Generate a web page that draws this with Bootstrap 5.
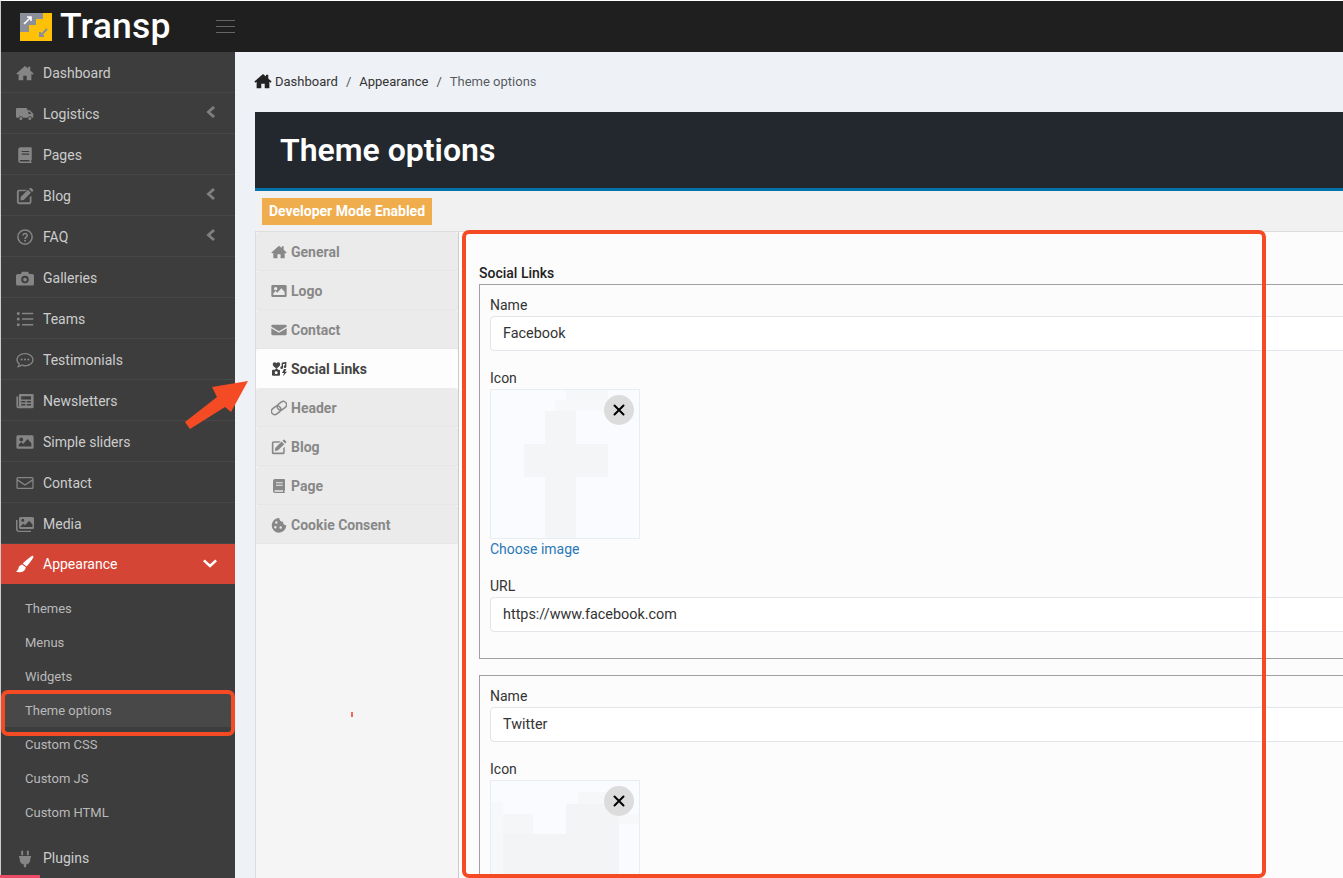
<!DOCTYPE html>
<html lang="en">
<head>
  <meta charset="UTF-8" />
  <meta name="viewport" content="width=device-width, initial-scale=1" />
  <title>Theme options</title>
  <link href="https://cdn.jsdelivr.net/npm/bootstrap@5.3.0/dist/css/bootstrap.min.css" rel="stylesheet" />
  <style>
    html, body { height: 100%; overflow: hidden; }
    body { font-family: Roboto, "Liberation Sans", sans-serif; font-size: 14px; background: #eef1f6; color: #333; position: relative; }
    .ic { width: 18px; height: 18px; fill: currentColor; flex: none; }

    .topbar { height: 52px; background: #1f1f1f; border-top: 1px solid #fff; border-left: 1px solid #ccc; padding-left: 19px; }
    .logo-box { width: 32px; height: 28px; margin-top: 1px; }
    .logo-text { font-size: 35.5px; font-weight: 500; color: #fff; line-height: 1; margin-left: 8px; width: 156px; letter-spacing: .2px; }
    .burger { width: 19px; height: 13px; border-top: 1px solid #666; border-bottom: 1px solid #666; position: relative; }
    .burger::after { content: ""; display: block; height: 1px; background: #666; margin-top: 5px; }

    .shell { height: 826px; }
    .side { width: 235px; flex: none; background: #3d3d3d; border-left: 1px solid #ccc; }
    .side-link { height: 41px; padding: 2px 16px 0 15px; border-bottom: 1px solid #474747; color: #ccc; text-decoration: none; font-size: 14px; }
    .side-link .ic { color: #858585; margin-right: 9px; }
    .side-link .arr { width: 14px; height: 14px; margin: -4px 2px 0 auto; color: #808080; }
    .side-link.on { background: #d54536; color: #fff; height: 40px; border: 0; padding-top: 0; }
    .side-link.on .ic { color: #fff; }
    .side-link.on .arr { margin-top: -2px; margin-right: 2px; }
    .sub-list { padding: 7px 0 8px; margin: 0; list-style: none; }
    .sub-link { height: 34px; padding: 2px 0 0 24px; color: #b9b9b9; font-size: 13px; text-decoration: none; }
    .sub-link.on { background: #484848; }
    .side-link.last { border: 0; }

    .page-main { width: 1108px; flex: none; padding: 0 0 0 20px; }
    .crumbs { height: 60px; margin: 0; font-size: 13px; --bs-breadcrumb-divider-color: #555; --bs-breadcrumb-item-padding-x: 8px; }
    .crumbs a { color: #333; text-decoration: none; }
    .crumbs .ic { width: 18px; height: 18px; color: #222; margin: 0 3px 0 -1px; vertical-align: -4px; }
    .page-head { height: 79px; background: #22282d; border-bottom: 3px solid #0073aa; color: #fff; padding: 0 25px; }
    .page-head h1 { font-size: 32px; font-weight: 600; margin: 0; }
    .dev-bar { height: 41px; background: #f1f1f1; padding: 7px; border-bottom: 1px solid #ddd; }
    .dev-tag { height: 27px; width: 170px; background: #f0ad4e; color: #fff; font-weight: 700; font-size: 14px; }

    .tabs-col { width: 204px; flex: none; background: #f5f5f5; border-left: 1px solid #ddd; border-right: 1px solid #ccc; min-height: 700px; }
    .tab-link { height: 39px; padding: 2px 0 0 15px; background: #ebebeb; border-bottom: 1px solid #e6e6e6; border-radius: 4px 4px 0 0; color: #888; font-weight: 700; font-size: 14px; text-decoration: none; }
    .tab-link .ic { width: 16px; height: 16px; margin-right: 4px; }
    .tab-link.on { background: #fdfdfd; color: #444; border-color: #fdfdfd; }
    .panel-area { flex: 1; background: #fcfcfc; padding: 33px 0 0 20px; min-width: 0; }
    .group-label { font-size: 14px; font-weight: 500; color: #222; margin-bottom: 2px; line-height: 17px; }
    .repeat-box { border: 1px solid #a0a0a0; padding: 11px 10px 26px; margin-bottom: 16px; width: 1000px; }
    .field-label { font-size: 14px; color: #333; margin-bottom: 2px; line-height: 18px; display: block; }
    .repeat-box .form-control { height: 35px; font-size: 14.4px; color: #333; border-color: #e2e5ea; border-radius: 4px; padding-left: 12px; margin-bottom: 18px; box-shadow: none; }
    .repeat-box .last-input { margin-bottom: 0; }
    .thumb { width: 150px; height: 150px; background: #fafbfe; border: 1px solid #e8edf1; position: relative; margin-top: 2px; }
    .thumb svg.pic { display: block; width: 148px; height: 148px; }
    .thumb-x { position: absolute; top: 5px; right: 5px; width: 30px; height: 30px; border-radius: 50%; background: #dcdcdc; border: 0; padding: 0; }
    .thumb-x svg { width: 12px; height: 12px; display: block; margin: auto; }
    .choose { color: #2a78b8; text-decoration: none; font-size: 14px; line-height: 18px; display: block; margin: 1px 0 19px; }

    /* annotation marks on top of the screenshot */
    .mark-box { position: absolute; border: 4px solid #f54b24; border-radius: 7px; pointer-events: none; }
    .mark-side { left: 1px; top: 690px; width: 234px; height: 46px; }
    .mark-main { left: 462px; top: 230px; width: 804px; height: 648px; }
    .mark-arrow { position: absolute; left: 180px; top: 375px; width: 75px; height: 60px; fill: #f54b24; }
    .mark-tick { position: absolute; left: 351px; top: 712px; width: 2px; height: 5px; background: #f0655f; }
    .mark-pink { position: absolute; left: 0; top: 875px; width: 40px; height: 3px; background: #ec4a68; }
  </style>
</head>
<body>
  <svg width="0" height="0" class="position-absolute">
    <defs>
      <symbol id="i-home" viewBox="0 0 24 24"><path d="M12 2.500 0.500 12.600l1.400 1.600L3.500 13v8.500h6.200v-6h4.600v6h6.200V13l1.600 1.200 1.400-1.600L19 8.600V3.500h-3v2.500z"/></symbol>
      <symbol id="i-truck" viewBox="0 0 24 24"><path d="M1.500 4h12A1.500 1.500 0 0 1 15 5.500V7h3.500L23 11.500V17h-1.700a3 3 0 0 0-5.600 0H9.300a3 3 0 0 0-5.600 0H1.500A1.500 1.500 0 0 1 0 15.500v-10A1.500 1.500 0 0 1 1.500 4zM6.500 16a2 2 0 1 1 0 4 2 2 0 0 1 0-4zm12 0a2 2 0 1 1 0 4 2 2 0 0 1 0-4zM16.500 9v3h4l-2.500-3z"/></symbol>
      <symbol id="i-book" viewBox="0 0 24 24"><path d="M6 1.500h13.500A1.500 1.500 0 0 1 21 3v15a1.500 1.500 0 0 1-.8 1.300v1.900a1 1 0 0 1 .8 1V22.500H6A3 3 0 0 1 3 19.500V4.500a3 3 0 0 1 3-3zM7.500 6.500v1.500h10V6.500zm0 3.500v1.500h10V10zM6 18.500a1 1 0 0 0 0 2h12v-2z"/></symbol>
      <symbol id="i-edit" viewBox="0 0 24 24"><path d="M4 3.500h10.500l-2.300 2.300H4.500a.8.800 0 0 0-.8.8v13a.8.800 0 0 0 .8.800h13a.8.800 0 0 0 .8-.8v-5.800l2.300-2.300v8.600a2.800 2.800 0 0 1-2.800 2.800H4a2.800 2.800 0 0 1-2.800-2.800V6.300A2.800 2.800 0 0 1 4 3.500zM20.200 1.200l2.600 2.600a1 1 0 0 1 0 1.400l-1.500 1.500-4-4 1.500-1.500a1 1 0 0 1 1.400 0zM15.900 3.800l4 4-9.600 9.600-4.500.5.500-4.500z"/></symbol>
      <symbol id="i-help" viewBox="0 0 24 24"><path d="M12 1.500a10.500 10.500 0 1 1 0 21 10.500 10.500 0 0 1 0-21zm0 2a8.500 8.500 0 1 0 0 17 8.500 8.500 0 0 0 0-17zm.2 3a3.800 3.800 0 0 1 3.800 3.500c0 2.800-2.900 2.800-2.900 4.600H11c0-3 2.900-3.200 2.900-4.600a1.700 1.700 0 0 0-3.400 0H8.400a3.800 3.800 0 0 1 3.800-3.500zM12 15.800a1.300 1.300 0 1 1 0 2.600 1.300 1.300 0 0 1 0-2.600z"/></symbol>
      <symbol id="i-camera" viewBox="0 0 24 24"><path d="M8 3.500h8l1.500 3h4A2.500 2.500 0 0 1 24 9v10.500a2.500 2.500 0 0 1-2.500 2.500h-19A2.500 2.500 0 0 1 0 19.500V9a2.500 2.500 0 0 1 2.500-2.500h4zM12 9a5 5 0 1 0 0 10 5 5 0 0 0 0-10zm0 2.500a2.500 2.500 0 1 1 0 5 2.500 2.500 0 0 1 0-5z"/></symbol>
      <symbol id="i-list" viewBox="0 0 24 24"><path d="M3 2.500a2 2 0 1 1 0 4 2 2 0 0 1 0-4zm5 1h15v2H8zM3 10a2 2 0 1 1 0 4 2 2 0 0 1 0-4zm5 1h15v2H8zM3 17.500a2 2 0 1 1 0 4 2 2 0 0 1 0-4zm5 1h15v2H8z"/></symbol>
      <symbol id="i-comment" viewBox="0 0 24 24"><path d="M12 2.500c6.400 0 11.500 4 11.500 9s-5.100 9-11.500 9c-1.500 0-3-.2-4.300-.7C6 21 3.500 22 .8 22c1.500-1.500 2.400-3 2.700-4.500C1.600 15.900.5 13.800.5 11.500c0-5 5.100-9 11.500-9zm0 1.800c-5.500 0-9.700 3.300-9.700 7.200 0 2 1.100 3.800 2.900 5.200-.1 1-.4 1.900-.9 2.800 1.300-.4 2.400-1.100 3.200-1.900 1.300.5 2.900.9 4.500.9 5.500 0 9.700-3.300 9.700-7S17.500 4.300 12 4.300zM7.500 10a1.400 1.400 0 1 1 0 2.800 1.400 1.400 0 0 1 0-2.800zm4.500 0a1.400 1.400 0 1 1 0 2.800 1.400 1.400 0 0 1 0-2.800zm4.500 0a1.400 1.400 0 1 1 0 2.800 1.400 1.400 0 0 1 0-2.800z"/></symbol>
      <symbol id="i-news" viewBox="0 0 24 24"><path d="M5 2.500h17A1.500 1.500 0 0 1 23.500 4v16a1.500 1.500 0 0 1-1.500 1.500H3A2.500 2.500 0 0 1 .5 19V6H3v13a.5.500 0 0 0 1 0V3.500A1 1 0 0 1 5 2.500zm2 3v4.500h13V5.500zm0 6.500v2h5.500v-2zm7.500 0v2H20v-2zM7 16v2h5.500v-2zm7.500 0v2H20v-2z"/></symbol>
      <symbol id="i-image" viewBox="0 0 24 24"><path d="M2.500 3h19A2 2 0 0 1 23.500 5v14a2 2 0 0 1-2 2h-19a2 2 0 0 1-2-2V5a2 2 0 0 1 2-2zM7 6a2.500 2.500 0 1 0 0 5 2.500 2.500 0 0 0 0-5zm-3.500 12h17v-4.500L15.500 8l-6 6.500-2.500-2.500-3.500 3.500z"/></symbol>
      <symbol id="i-mail" viewBox="0 0 24 24"><path d="M2.500 4h19A2 2 0 0 1 23.500 6v12a2 2 0 0 1-2 2h-19a2 2 0 0 1-2-2V6a2 2 0 0 1 2-2zm0 1.800a.3.300 0 0 0-.3.300v1l9.800 6.500 9.800-6.500v-1a.3.300 0 0 0-.3-.3zM2.200 9.200v8.800c0 .1.100.2.300.2h19c.2 0 .3-.1.300-.2V9.200l-9.800 6.500z"/></symbol>
      <symbol id="i-mail-solid" viewBox="0 0 24 24"><path d="M2.500 4h19A2 2 0 0 1 23.500 6v1L12 14 .5 7V6a2 2 0 0 1 2-2zM.5 9.300 12 16.300l11.500-7V18a2 2 0 0 1-2 2h-19a2 2 0 0 1-2-2z"/></symbol>
      <symbol id="i-images" viewBox="0 0 24 24"><path d="M6 2.500h16A2 2 0 0 1 24 4.500v12a2 2 0 0 1-2 2H6a2 2 0 0 1-2-2v-12a2 2 0 0 1 2-2zm3 2.500a2 2 0 1 0 0 4 2 2 0 0 0 0-4zM6 16h16v-3.500L17.500 7.500l-5.500 6-2-2L6 15zM0 6.500h2v12a2.500 2.500 0 0 0 2.500 2.500H20v1.500H4A4 4 0 0 1 0 18.500z"/></symbol>
      <symbol id="i-brush" viewBox="0 0 24 24"><path d="M22.500 1c1 .7.800 2 .2 3.100-1.900 3.400-5.500 8.100-8.700 11.300l-5-4.200C12.300 8 17.500 3.600 20.500 1.500c.7-.4 1.400-.8 2-.5zM8.300 12.500l4.700 3.900c-.4 3.700-3.100 6.600-7 6.600-2.500 0-5-.7-6-1.500 2.200-.7 2.800-2.300 3.300-4.300.6-2.500 2.500-4.400 5-4.700z"/></symbol>
      <symbol id="i-plug" viewBox="0 0 24 24"><path d="M7 1h2.500v6H7zm7.500 0H17v6h-2.500zM4 8h16v2.500h-1v2a7 7 0 0 1-5.500 6.800V23h-3v-3.700A7 7 0 0 1 5 12.500v-2H4z"/></symbol>
      <symbol id="i-left" viewBox="0 0 12 12"><path d="M8.600.8 10.300 2.500 6.300 6l4 3.500-1.700 1.700L2.900 6z"/></symbol>
      <symbol id="i-down" viewBox="0 0 12 12"><path d="M1.500 3 6 7 10.500 3 12 4.500 6 10 0 4.500z"/></symbol>
      <symbol id="i-link" viewBox="0 0 24 24"><g fill="none" stroke="currentColor" stroke-width="2.200" transform="rotate(-38 12 12)"><rect x="-1" y="7" width="15" height="10" rx="5"/><rect x="10" y="7" width="15" height="10" rx="5"/></g></symbol>
      <symbol id="i-cookie" viewBox="0 0 24 24"><path d="M12.500 1.500A5.500 5.500 0 0 0 18 7a5.500 5.500 0 0 0 5 5.500A11 11 0 1 1 12.500 1.500zM8 6.500a1.800 1.800 0 1 0 0 3.600 1.800 1.800 0 0 0 0-3.600zm-1.500 7a1.800 1.800 0 1 0 0 3.600 1.800 1.800 0 0 0 0-3.600zm8 .5a1.800 1.800 0 1 0 0 3.600 1.800 1.800 0 0 0 0-3.600z"/></symbol>
      <symbol id="i-social" viewBox="0 0 24 24"><path d="M5.500 2c1.200 0 2 .5 2.700 1.400C8.900 2.500 9.700 2 10.900 2c1.700 0 2.900 1.300 2.900 3 0 2.400-2.600 4.200-5.600 6.600C5.200 9.200 2.600 7.400 2.600 5c0-1.700 1.300-3 2.900-3zM16 2.500l7-1.500v7.500a2 2 0 1 1-2-2V4l-3 .7v5.300a2 2 0 1 1-2-2zM4.500 13h1.500l1-1.300h2.500l1 1.300h1.500A1.500 1.500 0 0 1 13.500 14.500v6A1.500 1.500 0 0 1 12 22H3a1.500 1.500 0 0 1-1.500-1.500v-6A1.500 1.500 0 0 1 3 13zm3.300 2.500a2.200 2.200 0 1 0 0 4.400 2.200 2.200 0 0 0 0-4.400zM19.500 12h3.500l-2 4h3l-6 7 1.500-5h-3z"/></symbol>
    </defs>
  </svg>

  <header class="topbar d-flex align-items-center">
    <svg class="logo-box" viewBox="0 0 32 28">
      <rect width="32" height="28" fill="#ffc107"/>
      <path d="M0 0h23v6h-7v6H9v7H0z" fill="#8a8f99"/>
      <path d="M4 11 11 4M7 4h4v4" stroke="#fff" stroke-width="1.600" fill="none"/>
      <path d="M27 16 20 23M24 23h-4v-4" stroke="#8a8f99" stroke-width="2" fill="none"/>
    </svg>
    <span class="logo-text">Transp</span>
    <span class="burger"></span>
  </header>

  <div class="shell d-flex">
    <nav class="side">
      <a class="side-link d-flex align-items-center" href="#"><svg class="ic"><use href="#i-home"/></svg>Dashboard</a>
      <a class="side-link d-flex align-items-center" href="#"><svg class="ic"><use href="#i-truck"/></svg>Logistics<svg class="ic arr"><use href="#i-left"/></svg></a>
      <a class="side-link d-flex align-items-center" href="#"><svg class="ic"><use href="#i-book"/></svg>Pages</a>
      <a class="side-link d-flex align-items-center" href="#"><svg class="ic"><use href="#i-edit"/></svg>Blog<svg class="ic arr"><use href="#i-left"/></svg></a>
      <a class="side-link d-flex align-items-center" href="#"><svg class="ic"><use href="#i-help"/></svg>FAQ<svg class="ic arr"><use href="#i-left"/></svg></a>
      <a class="side-link d-flex align-items-center" href="#"><svg class="ic"><use href="#i-camera"/></svg>Galleries</a>
      <a class="side-link d-flex align-items-center" href="#"><svg class="ic"><use href="#i-list"/></svg>Teams</a>
      <a class="side-link d-flex align-items-center" href="#"><svg class="ic"><use href="#i-comment"/></svg>Testimonials</a>
      <a class="side-link d-flex align-items-center" href="#"><svg class="ic"><use href="#i-news"/></svg>Newsletters</a>
      <a class="side-link d-flex align-items-center" href="#"><svg class="ic"><use href="#i-image"/></svg>Simple sliders</a>
      <a class="side-link d-flex align-items-center" href="#"><svg class="ic"><use href="#i-mail"/></svg>Contact</a>
      <a class="side-link d-flex align-items-center" href="#"><svg class="ic"><use href="#i-images"/></svg>Media</a>
      <a class="side-link on d-flex align-items-center" href="#"><svg class="ic"><use href="#i-brush"/></svg>Appearance<svg class="ic arr"><use href="#i-down"/></svg></a>
      <ul class="sub-list">
        <li><a class="sub-link d-flex align-items-center" href="#">Themes</a></li>
        <li><a class="sub-link d-flex align-items-center" href="#">Menus</a></li>
        <li><a class="sub-link d-flex align-items-center" href="#">Widgets</a></li>
        <li><a class="sub-link on d-flex align-items-center" href="#">Theme options</a></li>
        <li><a class="sub-link d-flex align-items-center" href="#">Custom CSS</a></li>
        <li><a class="sub-link d-flex align-items-center" href="#">Custom JS</a></li>
        <li><a class="sub-link d-flex align-items-center" href="#">Custom HTML</a></li>
      </ul>
      <a class="side-link last d-flex align-items-center" href="#"><svg class="ic"><use href="#i-plug"/></svg>Plugins</a>
    </nav>

    <main class="page-main">
      <ol class="breadcrumb crumbs align-items-center">
        <li class="breadcrumb-item"><a href="#"><svg class="ic"><use href="#i-home"/></svg>Dashboard</a></li>
        <li class="breadcrumb-item"><a href="#">Appearance</a></li>
        <li class="breadcrumb-item active">Theme options</li>
      </ol>
      <div class="page-head d-flex align-items-center"><h1>Theme options</h1></div>
      <div class="dev-bar"><span class="dev-tag d-flex align-items-center justify-content-center">Developer Mode Enabled</span></div>
      <div class="d-flex">
        <div class="tabs-col">
          <a class="tab-link d-flex align-items-center" href="#"><svg class="ic"><use href="#i-home"/></svg>General</a>
          <a class="tab-link d-flex align-items-center" href="#"><svg class="ic"><use href="#i-image"/></svg>Logo</a>
          <a class="tab-link d-flex align-items-center" href="#"><svg class="ic"><use href="#i-mail-solid"/></svg>Contact</a>
          <a class="tab-link on d-flex align-items-center" href="#"><svg class="ic"><use href="#i-social"/></svg>Social Links</a>
          <a class="tab-link d-flex align-items-center" href="#"><svg class="ic"><use href="#i-link"/></svg>Header</a>
          <a class="tab-link d-flex align-items-center" href="#"><svg class="ic"><use href="#i-edit"/></svg>Blog</a>
          <a class="tab-link d-flex align-items-center" href="#"><svg class="ic"><use href="#i-book"/></svg>Page</a>
          <a class="tab-link d-flex align-items-center" href="#"><svg class="ic"><use href="#i-cookie"/></svg>Cookie Consent</a>
        </div>
        <section class="panel-area">
          <div class="group-label">Social Links</div>
          <div class="repeat-box">
            <label class="field-label">Name</label>
            <input class="form-control" type="text" value="Facebook" />
            <label class="field-label">Icon</label>
            <div class="thumb">
              <svg class="pic" viewBox="0 0 148 148">
                <rect x="54" y="21" width="31" height="127" fill="#f4f5f7"/>
                <rect x="33" y="54" width="84" height="33" fill="#f4f5f7"/>
                <rect x="64" y="10" width="53" height="11" fill="#f7f8f9"/>
                <rect x="75" y="0" width="42" height="10" fill="#f6f7f8"/>
              </svg>
              <button class="thumb-x d-flex align-items-center justify-content-center" type="button" aria-label="Remove">
                <svg viewBox="0 0 12 12"><path d="M1.500 1.500l9 9m0-9-9 9" stroke="#000" stroke-width="2" stroke-linecap="round"/></svg>
              </button>
            </div>
            <a class="choose" href="#">Choose image</a>
            <label class="field-label">URL</label>
            <input class="form-control last-input" type="text" value="https://www.facebook.com" />
          </div>
          <div class="repeat-box">
            <label class="field-label">Name</label>
            <input class="form-control" type="text" value="Twitter" />
            <label class="field-label">Icon</label>
            <div class="thumb">
              <svg class="pic" viewBox="0 0 148 148">
                <rect x="0" y="21" width="12" height="73" fill="#f7f8fa"/>
                <rect x="12" y="33" width="30" height="40" fill="#f5f6f8"/>
                <rect x="12" y="53" width="116" height="95" fill="#f3f4f6"/>
                <rect x="75" y="23" width="53" height="30" fill="#f3f4f6"/>
                <rect x="87" y="11" width="30" height="12" fill="#f6f7f9"/>
                <rect x="128" y="33" width="20" height="10" fill="#f7f8fa"/>
              </svg>
              <button class="thumb-x d-flex align-items-center justify-content-center" type="button" aria-label="Remove">
                <svg viewBox="0 0 12 12"><path d="M1.500 1.500l9 9m0-9-9 9" stroke="#000" stroke-width="2" stroke-linecap="round"/></svg>
              </button>
            </div>
          </div>
        </section>
      </div>
    </main>
  </div>

  <div class="mark-box mark-side"></div>
  <div class="mark-box mark-main"></div>
  <svg class="mark-arrow" viewBox="0 0 75 60"><path d="M5 47 37 22 32 12 68 6 51 37 45 32 10 54z"/></svg>
  <span class="mark-tick"></span>
  <span class="mark-pink"></span>

  <script src="https://cdn.jsdelivr.net/npm/bootstrap@5.3.0/dist/js/bootstrap.bundle.min.js"></script>
</body>
</html>
